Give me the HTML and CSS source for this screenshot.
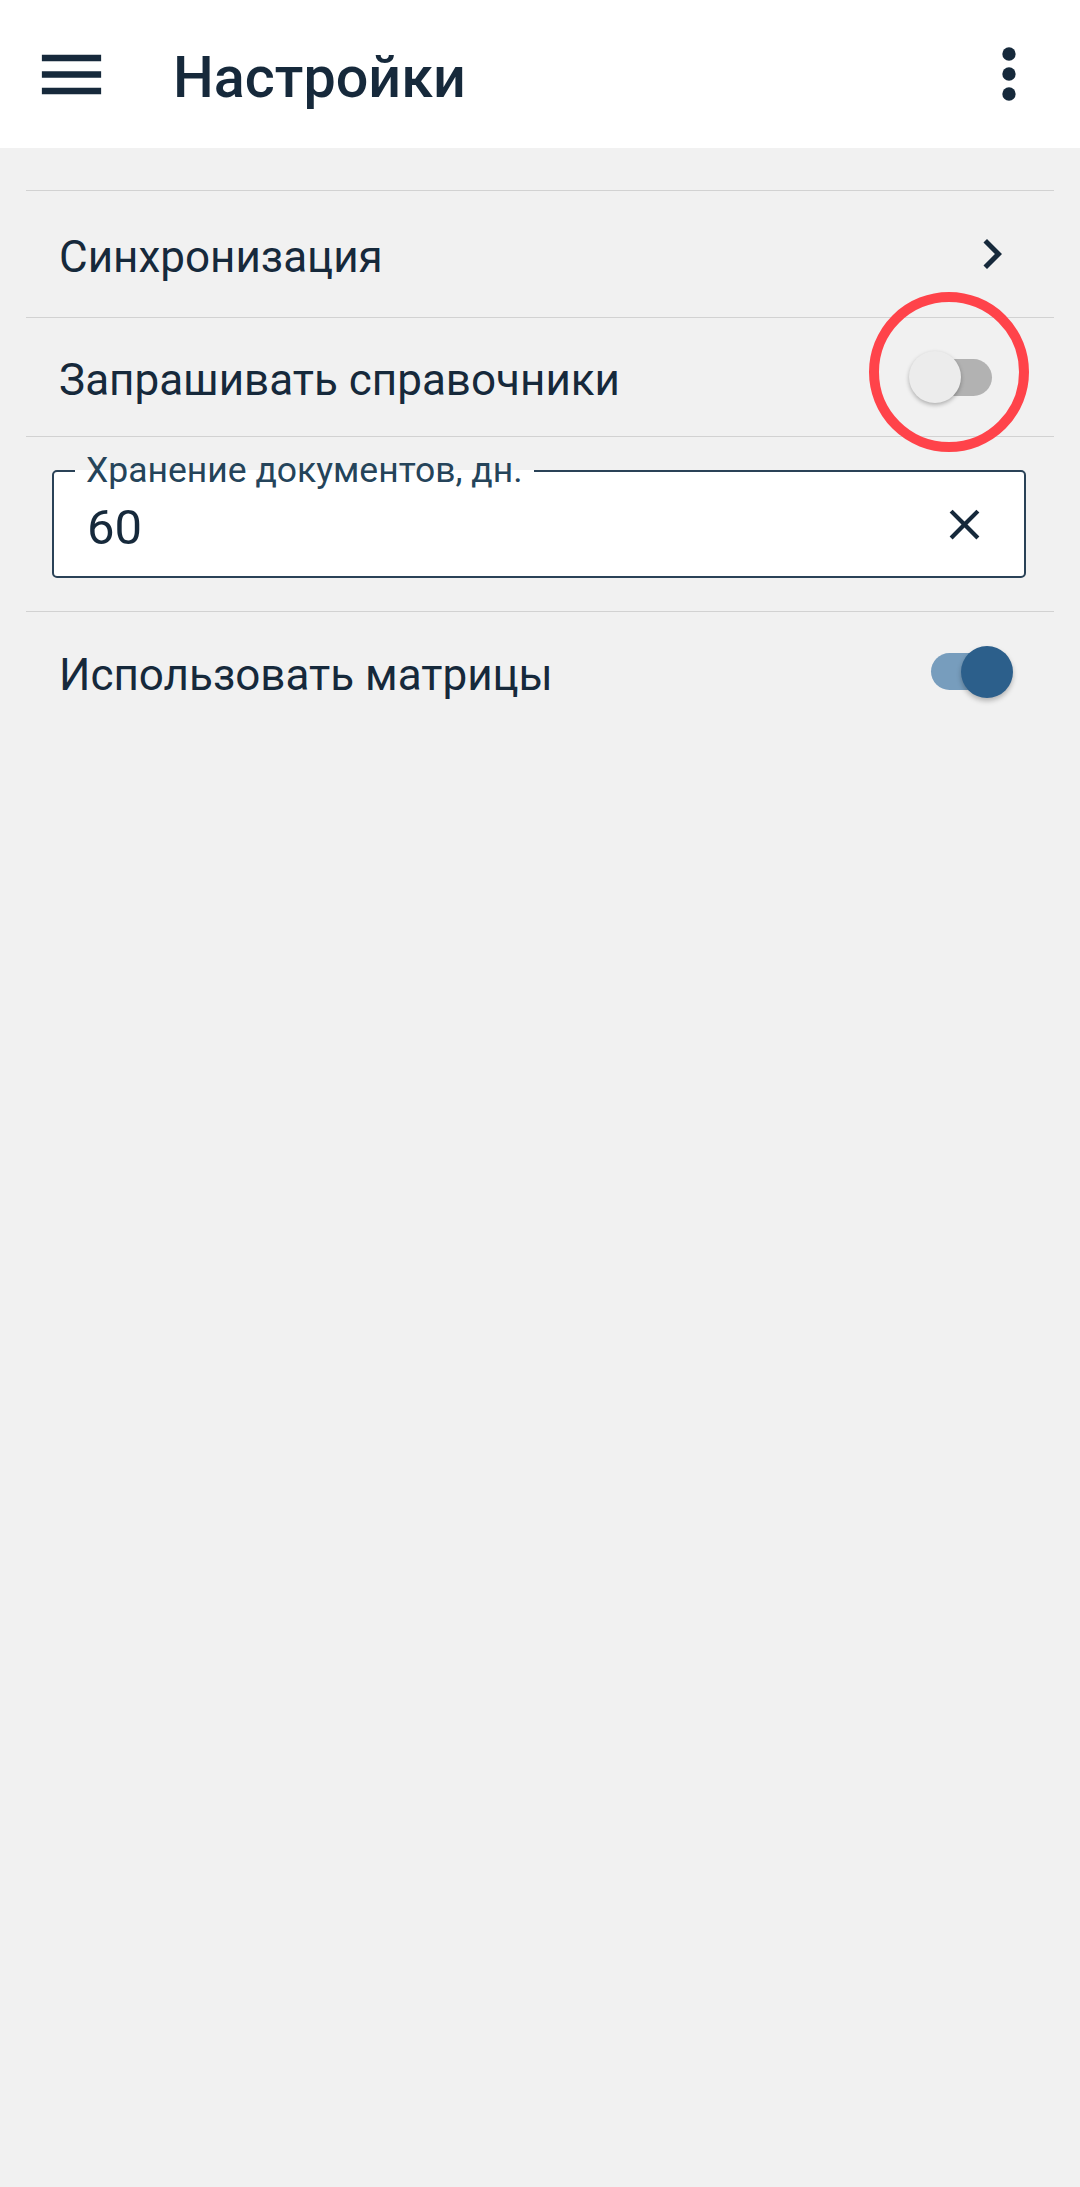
FILE: index.html
```html
<!DOCTYPE html>
<html lang="ru">
<head>
<meta charset="utf-8">
<title>Настройки</title>
<link rel="stylesheet" href="styles.css">
</head>
<body>
<header class="appbar">
  <svg class="appbar-icon" viewBox="0 0 24 24" aria-hidden="true"><path d="M3 18h18v-2H3v2zm0-5h18v-2H3v2zm0-7v2h18V6H3z"/></svg>
  <h1 class="appbar-title">Настройки</h1>
  <svg class="appbar-more" viewBox="0 0 24 24" aria-hidden="true"><circle cx="12" cy="6" r="2"/><circle cx="12" cy="12" r="2"/><circle cx="12" cy="18" r="2"/></svg>
</header>
<main class="settings">
  <div class="row row-nav">
    <span class="row-label">Синхронизация</span>
    <svg class="chevron" viewBox="0 0 24 24" aria-hidden="true"><path d="M10 6L8.59 7.41 13.17 12l-4.58 4.59L10 18l6-6z"/></svg>
  </div>
  <div class="row row-switch">
    <span class="row-label">Запрашивать справочники</span>
    <div class="switch">
      <span class="switch-track"></span>
      <span class="switch-thumb"></span>
      <span class="highlight-ring"></span>
    </div>
  </div>
  <div class="field-section">
    <div class="field">
      <span class="field-label">Хранение документов, дн.</span>
      <span class="field-value">60</span>
      <svg class="field-clear" viewBox="0 0 24 24" aria-hidden="true"><path d="M19 6.41L17.59 5 12 10.59 6.41 5 5 6.41 10.59 12 5 17.59 6.41 19 12 13.41 17.59 19 19 17.59 13.41 12z"/></svg>
    </div>
  </div>
  <div class="row row-switch row-last">
    <span class="row-label">Использовать матрицы</span>
    <div class="switch switch-on">
      <span class="switch-track"></span>
      <span class="switch-thumb"></span>
    </div>
  </div>
</main>
</body>
</html>
```

FILE: styles.css
```css
html, body {
  margin: 0;
  padding: 0;
}
body {
  background: #f1f1f1;
  font-family: Roboto, "Noto Sans", sans-serif;
  color: #16293b;
  min-height: 2187px;
}

.appbar {
  height: 148px;
  background: #ffffff;
  display: flex;
  align-items: center;
  padding: 0 31px 0 32px;
  box-sizing: border-box;
}
.appbar-icon {
  width: 79px;
  height: 79px;
  fill: #16293b;
  flex: none;
}
.appbar-title {
  margin: 8px 0 0 62px;
  font-size: 57.5px;
  font-weight: 500;
  line-height: 70px;
  flex: 1;
  color: #16293b;
}
.appbar-more {
  width: 80px;
  height: 80px;
  fill: #16293b;
  flex: none;
}

.settings {
  padding: 42px 26px 0;
}

.row {
  display: flex;
  align-items: center;
  border-top: 1px solid #d2d2d2;
  box-sizing: border-box;
  padding-left: 33px;
}
.row-nav {
  height: 127px;
  padding-right: 32px;
}
.row-switch {
  height: 119px;
  padding-right: 41px;
}
.row-last {
  height: 120px;
}
.row-label {
  flex: 1;
  font-size: 44px;
  line-height: 54px;
  padding-top: 6px;
}
.chevron {
  width: 60px;
  height: 60px;
  fill: #16293b;
  flex: none;
}

.switch {
  position: relative;
  display: grid;
  width: 104px;
  height: 52px;
  align-items: center;
  flex: none;
}
.switch-track {
  grid-area: 1 / 1;
  justify-self: center;
  width: 61px;
  height: 37px;
  border-radius: 19px;
  background: #b2b2b2;
}
.switch-thumb {
  grid-area: 1 / 1;
  justify-self: start;
  width: 52px;
  height: 52px;
  border-radius: 50%;
  background: #ececec;
  box-shadow: 0 2px 4px rgba(0, 0, 0, 0.28);
}
.switch-on .switch-track {
  background: #779dbd;
}
.switch-on .switch-thumb {
  justify-self: end;
  background: #2c5f8b;
  box-shadow: 0 3px 5px rgba(0, 0, 0, 0.25);
}
.highlight-ring {
  position: absolute;
  left: -40px;
  top: -59px;
  width: 160px;
  height: 160px;
  box-sizing: border-box;
  border: 10px solid #ff434a;
  border-radius: 50%;
}

.field-section {
  border-top: 1px solid #d2d2d2;
  padding: 33px 28px 33px 26px;
}
.field {
  position: relative;
  height: 108px;
  box-sizing: border-box;
  border: 2px solid #2a4257;
  border-radius: 5px;
  background: #ffffff;
  display: flex;
  align-items: center;
  padding: 0 34px 0 33px;
}
.field-label {
  position: absolute;
  left: 21px;
  top: -23px;
  padding: 0 11px;
  font-size: 35.5px;
  line-height: 42px;
  color: #25445a;
  background: linear-gradient(to bottom, #f1f1f1 0, #f1f1f1 21px, #ffffff 21px);
}
.field-value {
  flex: 1;
  font-size: 49px;
  line-height: 58px;
  margin-top: 8px;
  color: #16293b;
}
.field-clear {
  width: 51px;
  height: 51px;
  fill: #16293b;
  flex: none;
}
```
